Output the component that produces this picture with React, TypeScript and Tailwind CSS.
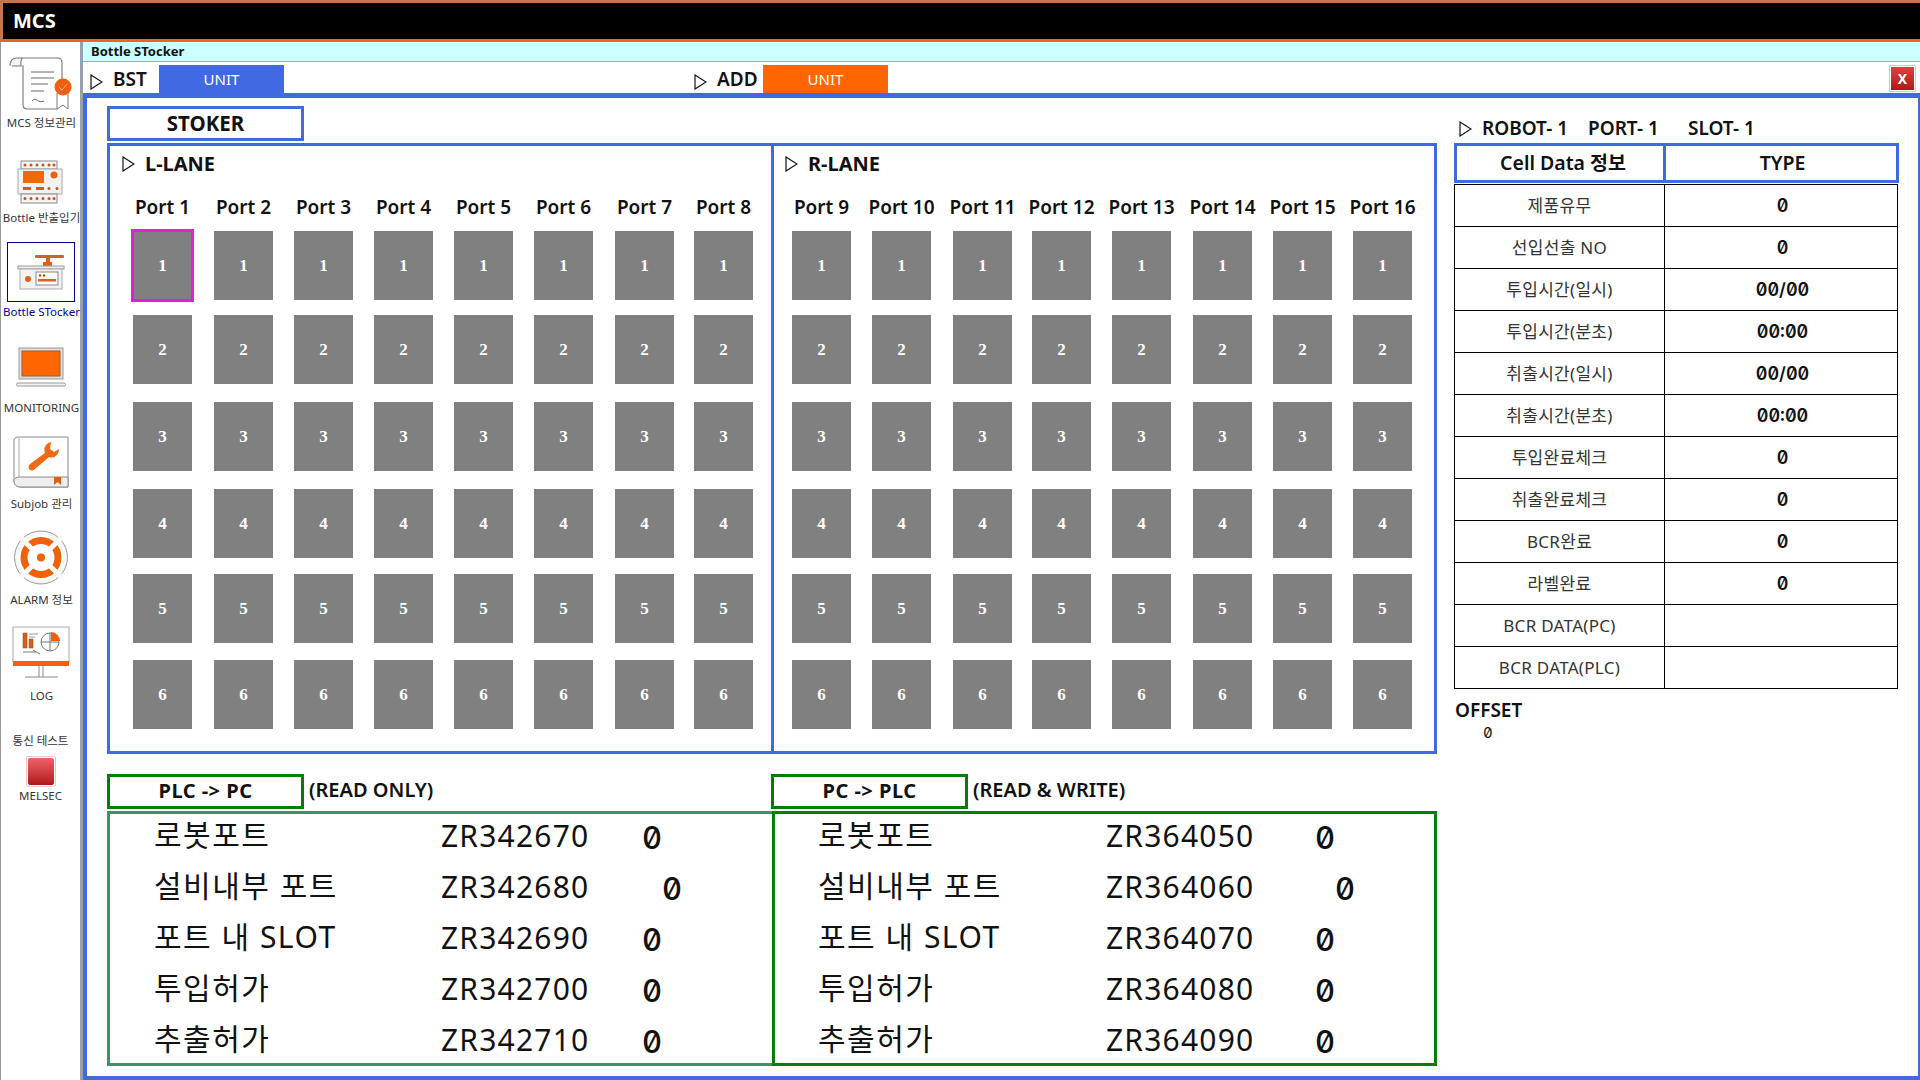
import React from "react";

const SANS = "font-['Noto_Sans','Noto_Sans_CJK_KR',sans-serif]";
const ZERO = "font-['Inter',sans-serif] slashed-zero tabular-nums";

function Tri({ className = "" }: { className?: string }) {
  return (
    <svg width="13" height="16" viewBox="0 0 13 16" className={className}>
      <path d="M1 1 L12 8 L1 15 Z" fill="none" stroke="#111" strokeWidth="1.2" />
    </svg>
  );
}

function IconScroll() {
  return (
    <svg width="66" height="56" viewBox="0 0 66 56">
      <path d="M15 1 H50 C53 1 54 3 54 6 V44 M15 8 V48 C15 51 17 52 20 52 H50" fill="#fff" stroke="#777" strokeWidth="1.1" />
      <path d="M2 9 C2 3 5 1 9 1 H15 C12 2 13 6 13 9 H4" fill="#f4f4f4" stroke="#777" strokeWidth="1.1" />
      <path d="M23 15 H46 M23 21 H46 M23 27 H40 M23 34 H36" stroke="#666" strokeWidth="1" />
      <path d="M24 44 C28 39 30 47 36 44" stroke="#666" strokeWidth="1" fill="none" />
      <path d="M49 36 V52 L55 48 L60 52 V36" fill="#fff" stroke="#777" strokeWidth="1" />
      <circle cx="55" cy="30" r="8.5" fill="#f05f10" />
      <path d="M51 30 L54 33 L59 27" stroke="#ffd0b0" strokeWidth="1" fill="none" opacity=".8" />
    </svg>
  );
}

function IconBottle() {
  return (
    <svg width="48" height="44" viewBox="0 0 48 44">
      <rect x="4" y="1" width="36" height="8" fill="#f6f6f6" stroke="#888" />
      <g fill="#b85a20">
        {[8, 14, 20, 26, 32, 37].map((x) => <circle key={x} cx={x} cy="5" r="1.5" />)}
      </g>
      <rect x="1" y="9" width="44" height="25" fill="#f2f2f2" stroke="#aaa" />
      <rect x="6" y="11" width="21" height="12" fill="#f56a00" />
      <circle cx="37" cy="15" r="3.5" fill="#e8650f" />
      <rect x="6" y="27" width="8" height="3" fill="#d95b0e" />
      <rect x="19" y="27" width="8" height="3" fill="#d95b0e" />
      <circle cx="32" cy="28.5" r="1.5" fill="#b85a20" />
      <circle cx="40" cy="28.5" r="1.5" fill="#b85a20" />
      <rect x="4" y="34" width="36" height="9" fill="#f6f6f6" stroke="#888" />
      <g fill="#b85a20">
        {[8, 14, 20, 26, 32, 37].map((x) => <circle key={x} cx={x} cy="38.5" r="1.5" />)}
      </g>
    </svg>
  );
}

function IconStocker() {
  return (
    <svg width="48" height="36" viewBox="0 0 48 36">
      <rect x="18" y="1" width="29" height="3" rx="1" fill="#c4672c" />
      <rect x="29" y="3" width="4" height="6" fill="#d9601a" />
      <rect x="26" y="8" width="9" height="4" fill="#d9601a" />
      <rect x="1" y="12" width="46" height="3" fill="#eee" stroke="#999" />
      <rect x="3" y="15" width="42" height="20" fill="#f2f2f2" stroke="#aaa" />
      <circle cx="11" cy="25" r="3" fill="#d9601a" />
      <rect x="19" y="18" width="22" height="13" fill="#fff" stroke="#888" />
      <circle cx="23" cy="21.5" r="1.2" fill="#a34a14" />
      <circle cx="27" cy="21.5" r="1.2" fill="#a34a14" />
      <rect x="21" y="25" width="18" height="2.5" fill="#d9601a" />
    </svg>
  );
}

function IconMonitor() {
  return (
    <svg width="50" height="40" viewBox="0 0 50 40">
      <rect x="3" y="1" width="44" height="31" fill="#ddd" stroke="#999" />
      <rect x="6" y="4" width="38" height="25" fill="#ff6600" stroke="#a85a20" />
      <rect x="0.5" y="36" width="49" height="3" rx="1.5" fill="#f2f2f2" stroke="#999" />
    </svg>
  );
}

function IconWrench() {
  return (
    <svg width="56" height="52" viewBox="0 0 56 52">
      <path d="M5 1 H55 V51 H8 C3 51 1 48 1 45 V5 C1 3 2 1 5 1 Z" fill="#fff" stroke="#888" />
      <path d="M6 2 V41" stroke="#aaa" />
      <path d="M1 45 C1 42 4 41 8 41 H55 V51 H8 C3 51 1 48 1 45 Z" fill="#eee" stroke="#888" />
      <path d="M38 6 C33 7 30 12 32 17 L17 28 C13 32 18 37 22 33 L36 21 C41 23 46 19 46 13 L41 16 L37 13 Z" fill="#ef6a12" />
      <path d="M41 41 H48 V49 L44.5 46 L41 49 Z" fill="#d9601a" />
    </svg>
  );
}

function IconAlarm() {
  return (
    <svg width="58" height="55" viewBox="0 0 58 55">
      <circle cx="29" cy="27.5" r="26.5" fill="#f7f7f7" stroke="#999" strokeWidth="1" />
      <circle cx="29" cy="27.5" r="22.5" fill="#fff" />
      <circle cx="29" cy="27.5" r="17" fill="none" stroke="#ef6208" strokeWidth="7" />
      <circle cx="29" cy="27.5" r="4" fill="#ef6208" />
      <path d="M8 7 L21 20 M50 7 L37 20 M8 48 L21 35 M50 48 L37 35" stroke="#fafafa" strokeWidth="5" />
    </svg>
  );
}

function IconLog() {
  return (
    <svg width="58" height="54" viewBox="0 0 58 54">
      <rect x="1" y="1" width="56" height="35" fill="#fff" stroke="#aaa" />
      <rect x="11" y="7" width="4" height="15" fill="#d9601a" stroke="#8a4a20" strokeWidth=".5" />
      <rect x="17" y="13" width="4" height="9" fill="#d9601a" stroke="#8a4a20" strokeWidth=".5" />
      <path d="M17 8 H26 M17 11 H23" stroke="#999" />
      <path d="M11 26 H24 M21 24 L28 28" stroke="#777" />
      <circle cx="38" cy="16" r="9" fill="none" stroke="#777" />
      <path d="M38 7 V25 M29 16 H47" stroke="#777" />
      <path d="M39 6 A9 9 0 0 1 48 15 H39 Z" fill="#ef6208" />
      <rect x="1" y="35" width="56" height="5" fill="#ef6208" />
      <path d="M27 40 V51 M31 40 V51 M13 51 H46" stroke="#888" />
    </svg>
  );
}

function SideItem({ icon, label, h, gap, mt = 0 }: { icon: React.ReactNode; label: string; h: number; gap: number; mt?: number }) {
  return (
    <div className="flex flex-col items-center" style={{ height: h, marginTop: mt }}>
      <div className="flex-1 flex items-end justify-center" style={{ paddingBottom: gap }}>{icon}</div>
      <div className="text-[11.5px] leading-[14px] whitespace-nowrap text-[#333] pl-[2px]">{label}</div>
    </div>
  );
}

function Sidebar() {
  return (
    <aside className="w-[83px] shrink-0 border-l border-l-[#999] border-r-[3px] border-r-[#9a9fb0] bg-white flex flex-col pt-[14px]">
      <SideItem h={74} gap={3} icon={<IconScroll />} label="MCS 정보관리" />
      <SideItem h={95} gap={7} icon={<IconBottle />} label="Bottle 반출입기" />
      <div className="flex flex-col items-center mt-[2px]">
        <div className="w-[68px] h-[60px] ml-[1px] border border-[#000080] flex items-center justify-center mt-[15px]"><IconStocker /></div>
        <div className="text-[11.5px] leading-[14px] mt-[3px] pl-[2px] text-[#000099] whitespace-nowrap">Bottle STocker</div>
      </div>
      <SideItem h={96} gap={14} icon={<IconMonitor />} label="MONITORING" />
      <SideItem h={96} gap={9} icon={<IconWrench />} label="Subjob 관리" />
      <SideItem h={96} gap={8} icon={<IconAlarm />} label="ALARM 정보" />
      <SideItem h={96} gap={9} icon={<IconLog />} label="LOG" />
      <div className="flex flex-col items-center mt-[31px]">
        <div className="text-[11.5px] leading-[14px] text-[#333]">통신 테스트</div>
        <div className="w-[30px] h-[31px] mt-[8px] border border-[#f4c4c4] p-[1px] rounded-[2px]">
          <div className="w-full h-full rounded-[2px] bg-gradient-to-b from-[#f0606a] to-[#b01515]" />
        </div>
        <div className="text-[11.5px] leading-[14px] mt-[2px] text-[#333]">MELSEC</div>
      </div>
    </aside>
  );
}

function Lane({ title, ports, cols, pl, className = "" }: { title: string; ports: number[]; cols: string; pl: string; className?: string }) {
  const rows = [1, 2, 3, 4, 5, 6];
  return (
    <div className={`flex flex-col ${className}`}>
      <div className="flex items-center h-[34px] pt-[2px]">
        <Tri className={pl === "l" ? "ml-[12px]" : "ml-[11px]"} />
        <span className="ml-[10px] text-[20px] font-bold text-[#111] leading-none">{title}</span>
      </div>
      <div className={`grid ${cols} ${pl === "l" ? "pl-[23px]" : "pl-[18px]"} grid-rows-[51px_84px_87px_87px_85px_86px_69px]`}>
        {ports.map((p) => (
          <div key={p} className="w-[59px] flex justify-center pt-[15px]">
            <span className="text-[19px] font-semibold text-[#111] leading-[24px] whitespace-nowrap">Port {p}</span>
          </div>
        ))}
        {rows.map((r) =>
          ports.map((p) => (
            <div key={p + "-" + r} className="relative w-[59px] h-[69px] bg-[#808080] flex items-center justify-center font-['Liberation_Serif',serif] font-bold text-[17px] text-white">
              {r}
              {p === 1 && r === 1 && <div className="absolute -inset-[2px] border-[3px] border-[#e020d8]" />}
            </div>
          ))
        )}
      </div>
    </div>
  );
}

const INFO: [string, string][] = [
  ["제품유무", "0"],
  ["선입선출 NO", "0"],
  ["투입시간(일시)", "00/00"],
  ["투입시간(분초)", "00:00"],
  ["취출시간(일시)", "00/00"],
  ["취출시간(분초)", "00:00"],
  ["투입완료체크", "0"],
  ["취출완료체크", "0"],
  ["BCR완료", "0"],
  ["라벨완료", "0"],
  ["BCR DATA(PC)", ""],
  ["BCR DATA(PLC)", ""],
];

function RightPanel() {
  return (
    <div className="w-[445px] ml-[17px] pt-[8px] flex flex-col">
      <div className="flex items-center h-[29px] text-[19px] font-semibold text-[#111] whitespace-nowrap">
        <Tri className="ml-[5px]" />
        <span className="ml-[10px] w-[106px]">ROBOT- 1</span>
        <span className="w-[100px]">PORT- 1</span>
        <span>SLOT- 1</span>
      </div>
      <div className="flex h-[40px] border-[3px] border-[#4169e1] text-[19.5px] font-semibold text-[#111] mb-[1px]">
        <div className="w-[209px] border-r-[3px] border-r-[#4169e1] flex items-center justify-center pl-[6px]">Cell Data 정보</div>
        <div className="flex-1 flex items-center justify-center pl-[3px]">TYPE</div>
      </div>
      <div className="border border-black border-b-0 w-[444px]">
        {INFO.map(([k, v]) => (
          <div key={k} className="flex h-[42px] border-b border-b-black">
            <div className="w-[210px] border-r border-r-black flex items-center justify-center text-[17px] tracking-[0.3px] text-[#333]">{k}</div>
            <div className={`flex-1 flex items-center justify-center pl-[3px] ${ZERO} font-semibold text-[18px] text-[#111] -mt-[1px]`}>{v}</div>
          </div>
        ))}
      </div>
      <div className="ml-[1px] mt-[8px] text-[19px] font-semibold leading-[26px] text-[#111]">OFFSET</div>
      <div className={`ml-[29px] ${ZERO} text-[15px] leading-[20px] text-[#111]`}>0</div>
    </div>
  );
}

function DataList({ rows, idW, zeroX }: { rows: [string, string, number][]; idW: string; zeroX: string }) {
  return (
    <div className="flex flex-col -mt-[4px]">
      {rows.map(([k, z, extra]) => (
        <div key={k} className="flex items-center h-[51px] whitespace-nowrap text-[#111]">
          <div className={`${idW} -mt-[3px] text-[30px] tracking-[1.5px]`}>{k}</div>
          <div className={`${zeroX} text-[30px] tracking-[1.2px]`}>{z}</div>
          <div className={`${ZERO} font-medium text-[31px] leading-none mt-[3px] ${extra ? "ml-[19px]" : "-ml-[1px]"}`}>0</div>
        </div>
      ))}
    </div>
  );
}

function GreenHead({ label, note }: { label: string; note: string }) {
  return (
    <>
      <div className="w-[197px] h-[35px] border-[3px] border-[#008000] flex items-center justify-center text-[20px] tracking-[0.5px] font-bold text-[#111] pb-[1px]">{label}</div>
      <span className="ml-[5px] text-[20px] font-semibold text-[#111] -mt-[3px]">{note}</span>
    </>
  );
}

export default function App() {
  const left: [string, string, number][] = [
    ["로봇포트", "ZR342670", 0],
    ["설비내부 포트", "ZR342680", 1],
    ["포트 내 SLOT", "ZR342690", 0],
    ["투입허가", "ZR342700", 0],
    ["추출허가", "ZR342710", 0],
  ];
  const right: [string, string, number][] = [
    ["로봇포트", "ZR364050", 0],
    ["설비내부 포트", "ZR364060", 1],
    ["포트 내 SLOT", "ZR364070", 0],
    ["투입허가", "ZR364080", 0],
    ["추출허가", "ZR364090", 0],
  ];
  return (
    <div className={`w-[1920px] h-[1080px] overflow-hidden flex flex-col bg-white ${SANS}`}>
      <header className="h-[42px] shrink-0 bg-black border-t-[3px] border-l-[3px] border-t-[#c8734a] border-l-[#c8734a] border-b-[3px] border-b-[#e8681a] flex items-center pl-[10px]">
        <span className="text-[20px] font-bold text-white leading-none">MCS</span>
      </header>
      <div className="flex-1 flex min-h-0">
        <Sidebar />
        <main className="flex-1 flex flex-col min-w-0">
          <div className="h-[20px] shrink-0 bg-[#ccffff] border-b border-b-[#d9a066] pl-[8px] flex items-center text-[13px] font-bold text-[#111]">Bottle STocker</div>
          <div className="h-[31px] shrink-0 flex items-end relative">
            <Tri className="ml-[7px] mb-[3px]" />
            <span className="ml-[10px] w-[46px] text-[19px] font-semibold leading-[28px] text-[#111]">BST</span>
            <div className="w-[125px] h-[28px] bg-[#4169e1] text-white text-[15px] flex items-center justify-center">UNIT</div>
            <Tri className="ml-[410px] mb-[3px]" />
            <span className="ml-[10px] w-[46px] text-[19px] font-semibold leading-[28px] text-[#111]">ADD</span>
            <div className="w-[125px] h-[28px] bg-[#ff6600] text-white text-[15px] flex items-center justify-center">UNIT</div>
            <div className="ml-auto mr-[4px] mb-[1px] w-[27px] h-[27px] border border-[#f0c0c0] p-[1px]">
              <div className="w-full h-full bg-gradient-to-b from-[#e04040] to-[#b01818] text-white text-[14px] font-bold flex items-center justify-center">X</div>
            </div>
          </div>
          <div className="flex-1 min-h-0 border-t-[5px] border-l-[4px] border-b-[4px] border-r-[2px] border-[#4169e1] pl-[20px] pt-[8px] flex">
            <div className="w-[1330px] shrink-0 flex flex-col">
              <div className="w-[197px] h-[35px] border-[3px] border-[#4169e1] flex items-center justify-center text-[20.5px] font-bold text-[#111] mb-[2px]">STOKER</div>
              <div className="h-[611px] w-[1330px] border-[3px] border-[#4169e1] flex">
                <Lane title="L-LANE" ports={[1,2,3,4,5,6,7,8]} pl="l" className="w-[664px] border-r-[3px] border-r-[#4169e1]" cols="grid-cols-[81px_80px_80px_80px_80px_81px_79px_59px]" />
                <Lane title="R-LANE" ports={[9,10,11,12,13,14,15,16]} pl="r" className="flex-1" cols="grid-cols-[80px_81px_79px_80px_81px_80px_80px_59px]" />
              </div>
              <div className="flex mt-[20px] h-[35px]">
                <div className="w-[664px] flex items-center"><GreenHead label="PLC -> PC" note="(READ ONLY)" /></div>
                <div className="flex items-center"><GreenHead label="PC -> PLC" note="(READ & WRITE)" /></div>
              </div>
              <div className="flex mt-[2px] h-[255px]">
                <div className="w-[665px] border-[3px] border-r-0 border-[#3d9068] pl-[44px] overflow-hidden">
                  <DataList rows={left} idW="w-[287px]" zeroX="w-[202px]" />
                </div>
                <div className="flex-1 border-[3px] border-[#008000] pl-[43px] overflow-hidden">
                  <DataList rows={right} idW="w-[288px]" zeroX="w-[210px]" />
                </div>
              </div>
            </div>
            <RightPanel />
          </div>
        </main>
      </div>
    </div>
  );
}
